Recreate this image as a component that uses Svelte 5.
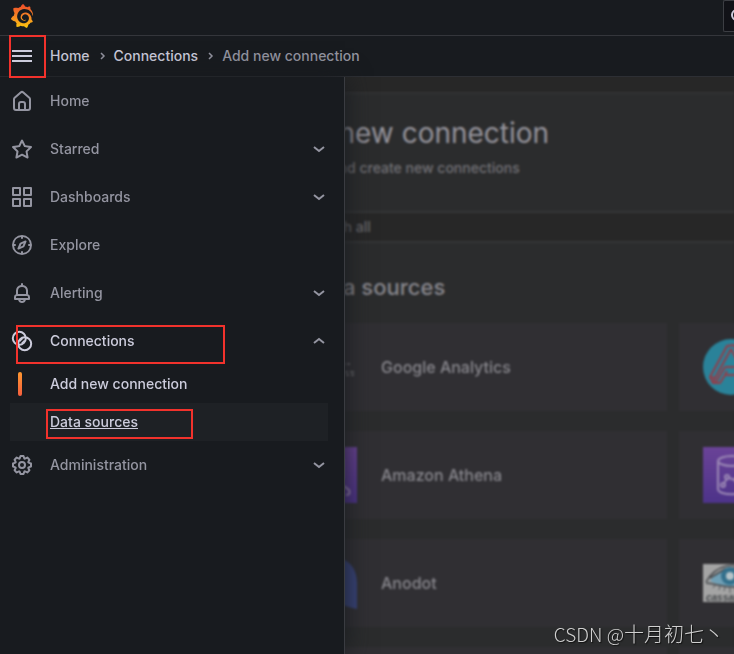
<script lang="ts">
	// Navigation drawer opened over the "Add new connection" page.

	interface NavItem {
		id: string;
		label: string;
		expandable?: boolean;
		children?: { label: string; active?: boolean; hovered?: boolean }[];
	}

	const ICONS: Record<string, string> = {
		home: 'M20,8h0L14,2.74a3,3,0,0,0-4,0L4,8a3,3,0,0,0-1,2.26V19a3,3,0,0,0,3,3H18a3,3,0,0,0,3-3V10.25A3,3,0,0,0,20,8ZM14,20H10V15a1,1,0,0,1,1-1h2a1,1,0,0,1,1,1Zm5-1a1,1,0,0,1-1,1H16V15a3,3,0,0,0-3-3H11a3,3,0,0,0-3,3v5H6a1,1,0,0,1-1-1V10.25a1,1,0,0,1,.34-.75l6-5.25a1,1,0,0,1,1.32,0l6,5.25a1,1,0,0,1,.34.75Z',
		starred: 'M22,9.67A1,1,0,0,0,21.14,9l-5.69-.83L12.9,3a1,1,0,0,0-1.8,0L8.55,8.16,2.86,9a1,1,0,0,0-.81.68,1,1,0,0,0,.25,1l4.13,4-1,5.68A1,1,0,0,0,6.9,21.44L12,18.77l5.1,2.67a.93.93,0,0,0,.46.12,1,1,0,0,0,.59-.19,1,1,0,0,0,.4-1l-1-5.68,4.13-4A1,1,0,0,0,22,9.67Zm-6.15,4a1,1,0,0,0-.29.88l.72,4.2-3.76-2a1.06,1.06,0,0,0-.94,0l-3.76,2,.72-4.2a1,1,0,0,0-.29-.88l-3-3,4.21-.61a1,1,0,0,0,.76-.55L12,5.7l1.88,3.82a1,1,0,0,0,.76.55l4.21.61Z',
		dashboards: 'M10,13H3a1,1,0,0,0-1,1v7a1,1,0,0,0,1,1h7a1,1,0,0,0,1-1V14A1,1,0,0,0,10,13ZM9,20H4V15H9ZM21,2H14a1,1,0,0,0-1,1v7a1,1,0,0,0,1,1h7a1,1,0,0,0,1-1V3A1,1,0,0,0,21,2ZM20,9H15V4h5Zm1,4H14a1,1,0,0,0-1,1v7a1,1,0,0,0,1,1h7a1,1,0,0,0,1-1V14A1,1,0,0,0,21,13Zm-1,7H15V15h5ZM10,2H3A1,1,0,0,0,2,3v7a1,1,0,0,0,1,1h7a1,1,0,0,0,1-1V3A1,1,0,0,0,10,2ZM9,9H4V4H9Z',
		explore: 'M12,2A10,10,0,1,0,22,12,10,10,0,0,0,12,2Zm1,17.93V19a1,1,0,0,0-2,0v.93A8,8,0,0,1,4.07,13H5a1,1,0,0,0,0-2H4.07A8,8,0,0,1,11,4.07V5a1,1,0,0,0,2,0V4.07A8,8,0,0,1,19.93,11H19a1,1,0,0,0,0,2h.93A8,8,0,0,1,13,19.93ZM15.14,7.55l-5,2.12a1,1,0,0,0-.52.52l-2.12,5a1,1,0,0,0,.21,1.1,1,1,0,0,0,.7.29.93.93,0,0,0,.4-.09l5-2.12a1,1,0,0,0,.52-.52l2.12-5a1,1,0,0,0-1.31-1.3Zm-2.49,5.1-2.28,1,1-2.28,2.28-1Z',
		alerting: 'M18,13.18V10a6,6,0,0,0-5-5.91V3a1,1,0,0,0-2,0V4.09A6,6,0,0,0,6,10v3.18A3,3,0,0,0,4,16v2a1,1,0,0,0,1,1H8.14a4,4,0,0,0,7.72,0H19a1,1,0,0,0,1-1V16A3,3,0,0,0,18,13.18ZM8,10a4,4,0,0,1,8,0v3H8Zm4,10a2,2,0,0,1-1.72-1h3.44A2,2,0,0,1,12,20Zm6-3H6V16a1,1,0,0,1,1-1H17a1,1,0,0,1,1,1Z',
		administration: 'M21.32,9.55l-1.89-.63.89-1.78A1,1,0,0,0,20.13,6L18,3.87a1,1,0,0,0-1.15-.19l-1.78.89-.63-1.89A1,1,0,0,0,13.5,2h-3a1,1,0,0,0-.95.68L8.92,4.57,7.14,3.68A1,1,0,0,0,6,3.87L3.87,6a1,1,0,0,0-.19,1.15l.89,1.78-1.89.63A1,1,0,0,0,2,10.5v3a1,1,0,0,0,.68.95l1.89.63-.89,1.78A1,1,0,0,0,3.87,18L6,20.13a1,1,0,0,0,1.15.19l1.78-.89.63,1.89a1,1,0,0,0,.95.68h3a1,1,0,0,0,.95-.68l.63-1.89,1.78.89A1,1,0,0,0,18,20.13L20.13,18a1,1,0,0,0,.19-1.15l-.89-1.78,1.89-.63A1,1,0,0,0,22,13.5v-3A1,1,0,0,0,21.32,9.55ZM20,12.78l-1.2.4A2,2,0,0,0,17.64,16l.57,1.14-1.1,1.1L16,17.64a2,2,0,0,0-2.79,1.16l-.4,1.2H11.22l-.4-1.2A2,2,0,0,0,8,17.64l-1.14.57-1.1-1.1L6.36,16A2,2,0,0,0,5.2,13.18L4,12.78V11.22l1.2-.4A2,2,0,0,0,6.36,8L5.79,6.89l1.1-1.1L8,6.36A2,2,0,0,0,10.82,5.2l.4-1.2h1.56l.4,1.2A2,2,0,0,0,16,6.36l1.14-.57,1.1,1.1L17.64,8a2,2,0,0,0,1.16,2.79l1.2.4ZM12,8a4,4,0,1,0,4,4A4,4,0,0,0,12,8Zm0,6a2,2,0,1,1,2-2A2,2,0,0,1,12,14Z'
	};

	const nav: NavItem[] = [
		{ id: 'home', label: 'Home' },
		{ id: 'starred', label: 'Starred', expandable: true },
		{ id: 'dashboards', label: 'Dashboards', expandable: true },
		{ id: 'explore', label: 'Explore' },
		{ id: 'alerting', label: 'Alerting', expandable: true },
		{
			id: 'connections',
			label: 'Connections',
			expandable: true,
			children: [
				{ label: 'Add new connection', active: true },
				{ label: 'Data sources', hovered: true }
			]
		},
		{ id: 'administration', label: 'Administration', expandable: true }
	];

	let openId = $state('connections');

	function toggle(id: string) {
		openId = openId === id ? '' : id;
	}
</script>

<div class="shell">
	<header class="topbar">
		<a class="logo" href="#home" aria-label="Grafana">
			<svg viewBox="0 0 24 24" width="24" height="24" aria-hidden="true">
				<defs>
					<linearGradient id="brand" x1="0" y1="1" x2="0" y2="0">
						<stop offset="0" stop-color="#fcc90b" />
						<stop offset="0.4" stop-color="#f79022" />
						<stop offset="1" stop-color="#ee4b2b" />
					</linearGradient>
				</defs>
				<path
					fill="url(#brand)"
					d="M23.02 10.59a8.578 8.578 0 0 0-.862-3.034 8.911 8.911 0 0 0-1.789-2.445c.337-1.342-.413-2.505-.413-2.505-1.292-.08-2.113.4-2.416.62-.052-.02-.102-.044-.154-.064-.22-.089-.446-.172-.677-.247-.231-.073-.47-.14-.711-.197a9.867 9.867 0 0 0-.875-.161C14.557.753 12.94 0 12.94 0c-1.804 1.145-2.147 2.744-2.147 2.744l-.018.093c-.098.029-.2.057-.298.088-.138.042-.275.094-.413.143-.138.055-.275.107-.41.166a8.869 8.869 0 0 0-1.557.87l-.063-.029c-2.497-.955-4.716.195-4.716.195-.203 2.658.996 4.33 1.235 4.636a11.608 11.608 0 0 0-.607 2.635C1.636 12.677.953 15.014.953 15.014c1.926 2.214 4.171 2.351 4.171 2.351.003-.002.006-.002.006-.005.285.509.615.994.986 1.446.156.19.32.371.488.548-.704 2.009.099 3.68.099 3.68 2.144.08 3.553-.937 3.849-1.173a9.784 9.784 0 0 0 3.164.501h.08l.055-.003.107-.002.103-.005.003.002c1.01 1.44 2.788 1.646 2.788 1.646 1.264-1.332 1.337-2.653 1.337-2.94v-.058c0-.02-.003-.039-.003-.06.265-.187.52-.387.758-.6a7.875 7.875 0 0 0 1.415-1.7c1.43.083 2.437-.885 2.437-.885-.236-1.49-1.085-2.216-1.264-2.354l-.018-.013-.016-.013a.217.217 0 0 1-.031-.02c.008-.092.016-.18.02-.27.011-.162.016-.323.016-.48v-.253l-.005-.098-.008-.135a1.891 1.891 0 0 0-.01-.13c-.003-.042-.008-.083-.013-.125l-.016-.124-.018-.122a6.215 6.215 0 0 0-2.032-3.73 6.015 6.015 0 0 0-3.222-1.46 6.292 6.292 0 0 0-.85-.048l-.107.002h-.063l-.044.003-.104.008a4.777 4.777 0 0 0-3.335 1.695c-.332.4-.592.84-.768 1.297a4.594 4.594 0 0 0-.312 1.817l.003.091c.005.055.007.11.013.164a3.615 3.615 0 0 0 .698 1.82 3.53 3.53 0 0 0 1.827 1.282c.33.098.66.14.971.137.039 0 .078 0 .114-.002l.063-.003c.02 0 .041-.003.062-.003.034-.002.065-.007.099-.01.007 0 .018-.003.028-.003l.031-.005.06-.008a1.18 1.18 0 0 0 .112-.02c.036-.008.072-.013.109-.024a2.634 2.634 0 0 0 .914-.415c.028-.02.056-.041.085-.065a.248.248 0 0 0 .039-.35.244.244 0 0 0-.309-.06l-.078.042c-.09.044-.184.083-.283.116a2.476 2.476 0 0 1-.475.096c-.028.003-.054.006-.083.006l-.083.002c-.026 0-.054 0-.08-.002l-.102-.006h-.012l-.024.006c-.016-.003-.031-.003-.044-.006-.031-.002-.06-.007-.091-.01a2.59 2.59 0 0 1-.724-.213 2.557 2.557 0 0 1-.667-.438 2.52 2.52 0 0 1-.805-1.475 2.306 2.306 0 0 1-.029-.444l.006-.122v-.023l.002-.031c.003-.021.003-.04.005-.06a3.163 3.163 0 0 1 1.352-2.29 3.12 3.12 0 0 1 .937-.43 2.946 2.946 0 0 1 .776-.101h.06l.07.002.045.003h.026l.07.005a4.041 4.041 0 0 1 1.635.49 3.94 3.94 0 0 1 1.602 1.662 3.77 3.77 0 0 1 .397 1.414l.005.076.003.075c.002.026.002.05.002.075 0 .024.003.052 0 .07v.065l-.002.073-.008.174a6.195 6.195 0 0 1-.08.639 5.1 5.1 0 0 1-.267.927 5.31 5.31 0 0 1-.624 1.13 5.052 5.052 0 0 1-3.237 2.014 4.82 4.82 0 0 1-.649.066l-.039.003h-.287a6.607 6.607 0 0 1-1.716-.265 6.776 6.776 0 0 1-3.4-2.274 6.75 6.75 0 0 1-.746-1.15 6.616 6.616 0 0 1-.714-2.596l-.005-.083-.002-.02v-.056l-.003-.073v-.096l-.003-.104v-.07l.003-.163c.008-.22.026-.45.054-.678a8.707 8.707 0 0 1 .28-1.355c.128-.444.286-.872.473-1.277a7.04 7.04 0 0 1 1.456-2.1 5.925 5.925 0 0 1 .953-.763c.169-.111.343-.213.524-.306.089-.05.182-.091.273-.135.047-.02.093-.042.138-.062a7.177 7.177 0 0 1 .714-.267l.145-.045c.049-.015.098-.026.148-.041.098-.029.197-.052.296-.076.049-.013.1-.02.15-.033l.15-.032.151-.028.076-.013.075-.01.153-.024c.057-.01.114-.013.171-.023l.169-.021c.036-.003.073-.008.106-.01l.073-.008.036-.003.042-.002c.057-.003.114-.008.171-.01l.086-.006h.023l.037-.003.145-.007a7.999 7.999 0 0 1 1.708.125 7.917 7.917 0 0 1 2.048.68 8.253 8.253 0 0 1 1.672 1.09l.09.077.089.078c.06.052.114.107.171.159.057.052.112.106.166.16.052.055.107.107.159.164a8.671 8.671 0 0 1 1.41 1.978c.012.026.028.052.04.078l.04.078.075.156c.023.051.05.1.07.153l.065.15a8.848 8.848 0 0 1 .45 1.34.19.19 0 0 0 .201.142.186.186 0 0 0 .172-.184c.01-.246.002-.532-.024-.856z"
				/>
			</svg>
		</a>
		<button type="button" class="quick-search" aria-label="Search">
			<svg viewBox="0 0 16 16" width="16" height="16" aria-hidden="true">
				<circle cx="7" cy="7" r="5" />
				<path d="M11 11l4 4" />
			</svg>
		</button>
	</header>

	<div class="crumbs">
		<button type="button" class="menu-toggle marked" aria-label="Toggle menu">
			<svg viewBox="0 0 24 24" width="24" height="24" aria-hidden="true">
				<path d="M2 7h20M2 12h20M2 17h20" />
			</svg>
		</button>
		<nav class="trail" aria-label="Breadcrumbs">
			<a href="#home">Home</a>
			<svg viewBox="0 0 8 8" width="8" height="8" aria-hidden="true"><path d="M3 1l3 3-3 3" /></svg>
			<a href="#connections">Connections</a>
			<svg viewBox="0 0 8 8" width="8" height="8" aria-hidden="true"><path d="M3 1l3 3-3 3" /></svg>
			<span>Add new connection</span>
		</nav>
	</div>

	<div class="body">
		<main class="page">
			<div class="panel">
				<h1>Add new connection</h1>
				<p class="lead">Browse and create new connections</p>
				<label class="search">
					<svg viewBox="0 0 16 16" width="16" height="16" aria-hidden="true">
						<circle cx="7" cy="7" r="5" />
						<path d="M11 11l4 4" />
					</svg>
					<input type="text" placeholder="Search all" aria-label="Search all" />
				</label>
				<h2>
					<svg viewBox="0 0 20 20" width="20" height="20" aria-hidden="true">
						<ellipse cx="10" cy="4" rx="7" ry="3" />
						<path d="M3 4v12c0 4 14 4 14 0V4M3 10c0 4 14 4 14 0" />
					</svg>
					Data sources
				</h2>
				<div class="grid">
					<a class="card" href="#google-analytics">
						<svg viewBox="0 0 56 56" width="56" height="56" aria-hidden="true">
							<path d="M6 38l8-12 7 5 9-15" stroke="#777" stroke-width="3" fill="none" />
							<path d="M40 25h4m2 0h3M38 33h4m2 0h3m2 0h4M39 36h3m3 0h3m2 0h3" stroke="#5f5e62" stroke-width="2" />
						</svg>
						Google Analytics
					</a>
					<a class="card" href="#app" aria-label="Data source">
						<svg viewBox="0 0 56 56" width="56" height="56" aria-hidden="true">
							<circle cx="28" cy="28" r="28" fill="#2a8299" />
							<g fill="none" stroke="#943d49" stroke-width="2" stroke-linejoin="round">
								<path d="M7 38L24 7l7-1 18 31-9 7-5-8H22l-5 8H10z" />
								<path d="M7 38l5 1L28 10M12 39l-2 5M28 10l8 15M22 28l-9 15M22 28h10M22 36l2-4" />
							</g>
						</svg>
					</a>
					<a class="card" href="#athena">
						<svg viewBox="0 0 56 56" width="56" height="56" aria-hidden="true">
							<rect width="56" height="56" fill="url(#violet)" />
							<path d="M14 12h28M14 12v26M42 12v20M43 39l5 4q2 5-3 5" stroke="#9c86b6" stroke-width="2" fill="none" />
						</svg>
						Amazon Athena
					</a>
					<a class="card" href="#database" aria-label="Data source">
						<svg viewBox="0 0 56 56" width="56" height="56" aria-hidden="true">
							<defs>
								<linearGradient id="violet" x1="0" y1="0" x2="0" y2="1">
									<stop offset="0" stop-color="#6a4397" />
									<stop offset="1" stop-color="#4d3389" />
								</linearGradient>
							</defs>
							<rect width="56" height="56" fill="url(#violet)" />
							<g fill="none" stroke="#9b88b5" stroke-width="2">
								<ellipse cx="29" cy="14" rx="14" ry="5" />
								<path d="M15 14v28c0 7 28 7 28 0V14M21 36l3-4M26 31l6 2" />
								<circle cx="20" cy="38" r="2" />
								<circle cx="24" cy="30" r="2" />
								<circle cx="34" cy="33" r="2" />
							</g>
						</svg>
					</a>
					<a class="card" href="#anodot">
						<svg viewBox="0 0 56 56" width="56" height="56" aria-hidden="true">
							<path d="M0 30C0 12 12 2 30 2s26 12 26 26v26c-14-3-18-6-26-6C12 50 0 42 0 30z" fill="#39447a" />
						</svg>
						Anodot
					</a>
					<a class="card" href="#cassandra" aria-label="Data source">
						<svg viewBox="0 0 56 56" width="56" height="56" aria-hidden="true">
							<rect y="9" width="56" height="38" fill="#a4a4a4" />
							<path d="M7 26c9-13 26-16 43 0-13 7-30 7-43 0z" fill="#6f9fb5" />
							<path d="M3 27c9-16 28-24 51-8M3 28c12 1 24 7 45 2M7 23L22 14l20-2" stroke="#45494d" stroke-width="1.5" fill="none" />
							<circle cx="27" cy="21" r="9" fill="#34708c" />
							<circle cx="27" cy="21" r="4" fill="#b5c3c9" />
							<path d="M12 30l-2 3M17 31l-1 4M22 32l-1 4M27 32v6M32 32l1 4" stroke="#55585b" stroke-width="1" />
							<text x="3" y="46" class="logo-text">cassandra</text>
						</svg>
					</a>
					<div class="card"></div>
					<div class="card"></div>
				</div>
			</div>
		</main>

		<nav class="drawer" aria-label="Main menu">
			<ul>
				{#each nav as item (item.id)}
					<li>
						<div class="row" class:current={item.children} class:marked={item.children}>
							<a href="#{item.id}">
								<svg class="icon" viewBox="0 0 24 24" width="24" height="24" aria-hidden="true">
									{#if item.id === 'connections'}
										<g fill="none" stroke="currentColor" stroke-width="2">
											<circle cx="9.3" cy="9.3" r="6.5" />
											<circle cx="14.7" cy="14.7" r="6.5" />
											<path d="M9.5 12.5l3-3M11.5 14.5l3-3" stroke-width="1.4" />
										</g>
									{:else}
										<path d={ICONS[item.id]} />
									{/if}
								</svg>
								{item.label}
							</a>
							{#if item.expandable}
								<button
									type="button"
									class="chevron"
									class:open={openId === item.id}
									aria-label="Toggle {item.label}"
									onclick={() => toggle(item.id)}
								>
									<svg viewBox="0 0 12 8" width="12" height="8" aria-hidden="true">
										<path d="M1 2l5 4 5-4" />
									</svg>
								</button>
							{/if}
						</div>
						{#if item.children && openId === item.id}
							<ul>
								{#each item.children as child}
									<li class="sub" class:active={child.active} class:hovered={child.hovered}>
										<a href="#{item.id}">{child.label}</a>
									</li>
								{/each}
							</ul>
						{/if}
					</li>
				{/each}
			</ul>
		</nav>
	</div>

	<div class="watermark"><span>CSDN @</span>十月初七丶</div>
</div>

<style>
	:global(body) {
		background: #181b1f;
	}

	.shell {
		position: relative;
		display: flex;
		flex-direction: column;
		height: 100vh;
		overflow: hidden;
		font-family: Inter, Roboto, sans-serif;
		font-size: 14px;
		font-weight: 500;
		line-height: 20px;
		color: #ccccdc;
		background: #181b1f;
	}

	a {
		color: inherit;
		text-decoration: none;
	}

	button {
		padding: 0;
		border: none;
		background: none;
		color: inherit;
		font: inherit;
		cursor: pointer;
	}

	svg {
		display: block;
		flex-shrink: 0;
	}

	.topbar {
		display: flex;
		justify-content: space-between;
		align-items: flex-start;
		flex-shrink: 0;
		height: 35px;
		padding-left: 10px;
		border-bottom: 1px solid #34363b;
	}

	.logo {
		padding-top: 4px;
	}

	.quick-search {
		display: flex;
		align-items: center;
		width: 11px;
		height: 32px;
		padding-left: 6px;
		overflow: hidden;
		box-sizing: border-box;
		border: 1px solid #3c3e43;
		border-right: none;
		border-radius: 2px 0 0 2px;
		background: #111217;
	}

	.quick-search svg,
	.menu-toggle svg,
	.trail svg,
	.search svg,
	.chevron svg,
	h2 svg {
		fill: none;
		stroke: currentColor;
		stroke-width: 2;
	}

	.crumbs {
		display: flex;
		align-items: center;
		gap: 16px;
		flex-shrink: 0;
		height: 40px;
		padding-left: 10px;
		border-bottom: 1px solid #2d2f34;
	}

	.menu-toggle {
		position: relative;
		z-index: 1;
	}

	.trail {
		display: flex;
		align-items: center;
		gap: 8px;
		white-space: nowrap;
	}

	.trail svg {
		stroke-width: 1.5;
	}

	.trail span,
	.trail svg {
		color: #9495a1;
	}

	.body {
		position: relative;
		flex: 1;
		min-height: 0;
	}

	.page {
		height: 100%;
		overflow: hidden;
		background: #272727;
		color: #88878d;
	}

	.panel {
		margin: 15px 0 0 245px;
		padding: 23px 32px;
		border-top: 2px solid #323334;
		background: #2b2c2d;
		filter: blur(1px);
	}

	h1,
	h2,
	p {
		margin: 0;
		font-weight: 500;
	}

	h1 {
		font-size: 28px;
		font-weight: 400;
		line-height: 32px;
		color: #96949c;
	}

	.lead {
		margin-top: 8px;
		color: #727176;
		line-height: 22px;
	}

	.search {
		display: flex;
		align-items: center;
		gap: 8px;
		height: 28px;
		margin: 32px -32px 32px 0;
		padding-left: 2px;
		border: 2px solid #353637;
		border-right: none;
		background: #272727;
		color: #68676c;
	}

	.search input {
		flex: 1;
		padding: 0;
		border: none;
		background: none;
		font: inherit;
		color: inherit;
	}

	.search input::placeholder {
		color: #68676c;
		opacity: 1;
	}

	h2 {
		display: flex;
		align-items: center;
		gap: 10px;
		font-size: 22px;
		line-height: 24px;
	}

	.grid {
		display: grid;
		grid-template-columns: repeat(2, 390px);
		gap: 20px 12px;
		margin-top: 24px;
	}

	.card {
		display: flex;
		align-items: center;
		gap: 24px;
		height: 88px;
		padding: 0 24px;
		box-sizing: border-box;
		background: #302f33;
		font-size: 16px;
	}

	.logo-text {
		font: italic bold 10px 'Liberation Sans', sans-serif;
		fill: #44474a;
	}

	.drawer {
		position: absolute;
		top: 0;
		bottom: 0;
		left: 0;
		width: 328px;
		padding-right: 16px;
		border-right: 1px solid #3a3c41;
		background: #181b1f;
		color: #9495a1;
		box-shadow: 0 0 24px #181b1f;
	}

	ul {
		margin: 0;
		padding: 0;
		list-style: none;
	}

	.row {
		position: relative;
		display: flex;
		align-items: center;
		justify-content: space-between;
		height: 48px;
		padding-left: 10px;
	}

	.row.current > a {
		color: #ccccdc;
	}

	.row a {
		display: flex;
		align-items: center;
		gap: 16px;
	}

	.icon {
		fill: currentColor;
	}

	.chevron {
		padding: 8px 3px;
	}

	.chevron.open svg {
		transform: rotate(180deg);
	}

	.sub {
		position: relative;
		display: flex;
		align-items: center;
		height: 38px;
		margin-left: 10px;
		padding-left: 40px;
		color: #ccccdc;
	}

	.active::before {
		content: '';
		position: absolute;
		left: 8px;
		top: 7px;
		width: 4px;
		height: 24px;
		border-radius: 2px;
		background: linear-gradient(#ff9830, #f55f3e);
	}

	.hovered {
		background: #1e2125;
	}

	.hovered a {
		text-decoration: underline;
	}

	/* Red call-outs that lead the reader through the steps */
	.marked::after,
	.hovered::after {
		content: '';
		position: absolute;
		border: 2px solid #f2322c;
		box-sizing: border-box;
		pointer-events: none;
	}

	.menu-toggle::after {
		left: -1px;
		top: -9px;
		width: 37px;
		height: 43px;
	}

	.row.marked::after {
		left: 16px;
		top: 8px;
		width: 209px;
		height: 39px;
	}

	.hovered::after {
		left: 36px;
		top: 6px;
		width: 147px;
		height: 30px;
	}

	.watermark {
		position: absolute;
		right: 10px;
		bottom: 6px;
		font-family: 'Noto Sans CJK SC', sans-serif;
		font-size: 20px;
		font-weight: 300;
		line-height: 28px;
		color: #d0d0d0;
		text-shadow: 1px 1px 1px #111;
		white-space: nowrap;
	}

	.watermark span {
		font-size: 19px;
	}
</style>
